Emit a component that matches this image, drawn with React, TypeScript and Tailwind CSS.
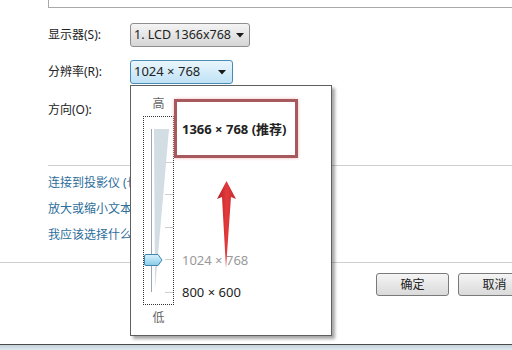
import React from 'react';

const font = "font-['Noto_Sans','Noto_Sans_CJK_SC',sans-serif]";

const Caret = () => (
  <svg width="8" height="5" viewBox="0 0 8 5" className="shrink-0">
    <path d="M0 0 H8 L4 4.5 Z" fill="#1a1a1a" />
  </svg>
);

const Slider = () => (
  <svg width="29" height="187" viewBox="0 0 29 187" className="block">
    <polygon points="10,12 25,12 11,172" fill="#d3dde4" />
    <line x1="7.5" y1="12" x2="7.5" y2="175" stroke="#9aa7b0" strokeWidth="1" />
    {[45, 77, 110, 142, 175].map((y) => (
      <line key={y} x1="21" y1={y + 0.5} x2="29" y2={y + 0.5} stroke="#cfcfcf" strokeWidth="1" />
    ))}
    <defs>
      <linearGradient id="thumb" x1="0" y1="0" x2="0" y2="1">
        <stop offset="0" stopColor="#d9f1fb" />
        <stop offset="1" stopColor="#86cbe9" />
      </linearGradient>
    </defs>
    <path d="M0.5 139 Q0.5 137.5 2 137.5 H14 L18 143 L14 148.5 H2 Q0.5 148.5 0.5 147 Z" fill="url(#thumb)" stroke="#3f86ad" />
  </svg>
);

const Arrow = () => (
  <svg width="19" height="88" viewBox="0 0 19 88" className="absolute left-[86px] top-[95px]">
    <defs>
      <linearGradient id="arr" x1="0" y1="0" x2="1" y2="0">
        <stop offset="0" stopColor="#b81c22" />
        <stop offset="0.5" stopColor="#e23a3c" />
        <stop offset="1" stopColor="#c52a2e" />
      </linearGradient>
    </defs>
    <polygon points="9.5,0 0,18 5,16 9,87 14,16 19,18" fill="url(#arr)" />
  </svg>
);

export default function App() {
  return (
    <div className={`relative w-[512px] h-[350px] bg-white overflow-hidden flex flex-col text-[#222] ${font}`}>
      {/* box above */}
      <div className="h-[8px] ml-[48px] border-l border-b border-[#a9a9a9]" />

      {/* form rows */}
      <div className="ml-[48px] mt-[15px] flex flex-col text-[12px]">
        <div className="flex items-center h-[24px]">
          <span className="w-[82px]">显示器(S):</span>
          <div className="w-[120px] h-[24px] flex items-center justify-between pl-[3px] pr-[5px] rounded-[3px] border border-[#8e8e8e] bg-gradient-to-b from-[#f4f4f4] to-[#d6d6d6] text-[12.5px]">
            <span>1. LCD 1366x768</span>
            <Caret />
          </div>
        </div>
        <div className="flex items-center h-[24px] mt-[13px]">
          <span className="w-[82px]">分辨率(R):</span>
          <div className="w-[103px] h-[24px] flex items-center justify-between pl-[3px] pr-[6px] rounded-[3px] border border-[#4a8bb8] bg-gradient-to-b from-[#eaf6fd] to-[#bfe2f5] text-[13px]">
            <span>1024 × 768</span>
            <Caret />
          </div>
        </div>
        <div className="flex items-center h-[16px] mt-[18px]">
          <span>方向(O):</span>
        </div>
      </div>

      <div className="mt-[47px] ml-[48px] border-t border-[#cfcfcf]" />

      {/* links */}
      <div className="ml-[48px] mt-[4px] flex flex-col text-[12px] leading-[26px] text-[#2d6e9a]">
        <span>连接到投影仪 (也可按 Windows 徽标键 + P)</span>
        <span>放大或缩小文本和其他项目</span>
        <span>我应该选择什么显示器设置?</span>
      </div>

      <div className="mt-[14px] border-t border-[#cfcfcf]" />

      {/* buttons */}
      <div className="mt-[10px] ml-[376px] flex gap-[9px] text-[12px]">
        <button className="shrink-0 w-[73px] h-[23px] rounded-[3px] border border-[#7a7a7a] bg-gradient-to-b from-[#f5f5f5] to-[#dadada]">确定</button>
        <button className="shrink-0 w-[73px] h-[23px] rounded-[3px] border border-[#7a7a7a] bg-gradient-to-b from-[#f5f5f5] to-[#dadada]">取消</button>
      </div>

      {/* window frame below */}
      <div className="mt-auto h-[6px] border-t border-[#4a4a4a] bg-gradient-to-b from-[#c4d1da] to-[#dfe8ee]" />

      {/* resolution dropdown panel */}
      <div className="absolute left-[130px] top-[85px] w-[202px] h-[251px] bg-white border border-[#5f5f5f] shadow-[3px_3px_3px_rgba(0,0,0,0.35)] flex pl-[12px] pt-[10px] text-[12px]">
        <div className="w-[31px] flex flex-col items-center">
          <span className="leading-[16px] text-[#666]">高</span>
          <div className="mt-[4px] w-[31px] h-[189px] border border-dotted border-[#333]">
            <Slider />
          </div>
          <span className="mt-[5px] leading-[16px] text-[#666]">低</span>
        </div>
        <div className="flex flex-col">
          <div className="mt-[3px] w-[124px] h-[59px] border-[3px] border-[#a65a5e] shadow-[0_0_3px_#f2b4b4] flex items-center pl-[5px] font-bold text-[13px] leading-[16px]">
            1366 × 768 (推荐)
          </div>
          <span className="mt-[94px] ml-[8px] leading-[16px] text-[13px] text-[#999]">1024 × 768</span>
          <span className="mt-[16px] ml-[8px] leading-[16px] text-[13px]">800 × 600</span>
        </div>
        <Arrow />
      </div>
    </div>
  );
}
